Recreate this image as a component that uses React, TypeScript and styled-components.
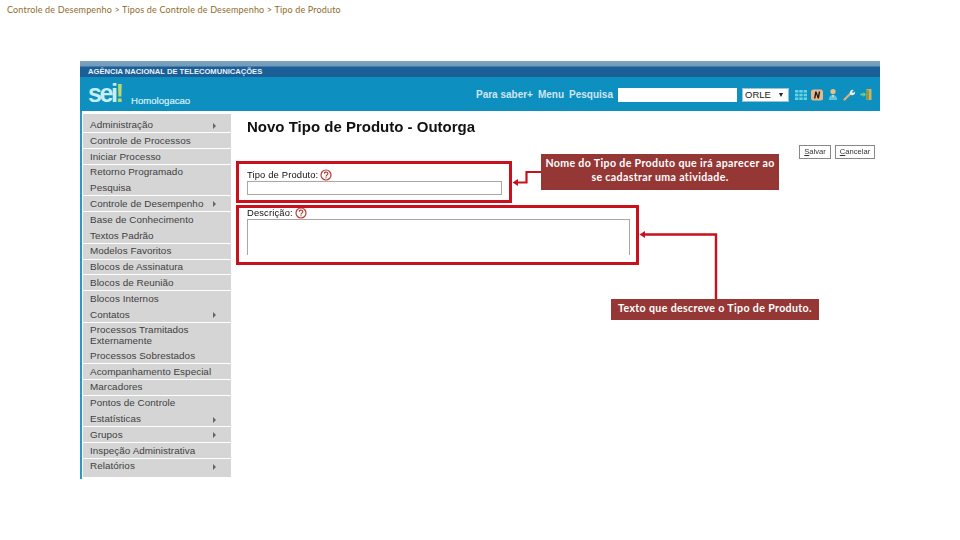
import React from "react";
import styled, { createGlobalStyle } from "styled-components";

const Global = createGlobalStyle`
  html, body { margin: 0; padding: 0; background: #fff; }
`;

const Page = styled.div`
  position: relative;
  width: 960px;
  height: 540px;
  overflow: hidden;
  background: #fff;
`;

const Crumb = styled.div`
  height: 61px;
  box-sizing: border-box;
  padding: 3px 0 0 7px;
  font: 9px/13px Lato, "Open Sans", sans-serif;
  letter-spacing: 0.17px;
  color: #8f6c2c;
  white-space: pre;
`;

const Window = styled.div`
  width: 800px;
  margin-left: 80px;
  height: 418px;
  display: flex;
  flex-direction: column;
  font-family: "Liberation Sans", Arial, sans-serif;
  filter: blur(0.25px);
`;

const TopStrip = styled.div`
  flex: none;
  height: 16px;
  box-sizing: border-box;
  padding: 6px 0 0 8px;
  background: linear-gradient(#7ea3c0 0, #6f9cbd 5px, #1b5e98 6px, #1b5e98 100%);
  color: #e9f2f8;
  font-size: 7.6px;
  line-height: 10px;
  font-weight: 700;
  letter-spacing: 0;
  white-space: nowrap;
`;

const Banner = styled.div`
  flex: none;
  height: 34px;
  background: #0d8fc0;
  display: flex;
  align-items: center;
  padding: 0 5px 0 8px;
`;

const Logo = styled.div`
  flex: none;
  font-weight: 700;
  font-size: 25px;
  line-height: 34px;
  letter-spacing: -2.4px;
  color: #c6eef4;
  height: 34px;
  margin-top: -3px;
  width: 42px;
  padding-left: 0;
`;

const Bang = styled.span`
  color: #b5dd6a;
`;

const Env = styled.div`
  align-self: flex-end;
  margin: 0 0 4px 1px;
  font-size: 9.6px;
  line-height: 12px;
  color: #d9eff6;
  font-weight: 400;
  -webkit-text-stroke: 0.2px #d9eff6;
`;

const Tools = styled.div`
  margin-left: auto;
  margin-right: 3px;
  display: flex;
  align-items: center;
  margin-top: 1px;
`;

const ToolLink = styled.span`
  font-size: 10px;
  font-weight: 700;
  color: #cfe6f2;
  margin-right: 5px;
  white-space: nowrap;
`;

const SearchBox = styled.div`
  width: 119px;
  height: 14px;
  background: #fff;
  margin: 0 5px 0 0;
`;

const Select = styled.div`
  width: 47px;
  height: 14px;
  box-sizing: border-box;
  background: #fff;
  border: 1px solid #9fc3d6;
  color: #222;
  font-size: 9.5px;
  line-height: 12px;
  padding-left: 2px;
  position: relative;
  margin-right: 6px;
  &::after {
    content: "";
    position: absolute;
    right: 5px;
    top: 4px;
    border-left: 2px solid transparent;
    border-right: 2px solid transparent;
    border-top: 4px solid #222;
  }
`;

const Icons = styled.div`
  display: flex;
  gap: 4px;
  align-items: center;
`;

const Body = styled.div`
  flex: 1;
  min-height: 0;
  display: flex;
  border-left: 2px solid #2a98c4;
`;

const Menu = styled.nav`
  flex: none;
  width: 148px;
  margin: 3px 0 2px 1px;
  box-sizing: border-box;
  padding: 3.5px 0 0;
  background: #d5d5d5;
  display: flex;
  flex-direction: column;
`;

const MenuItem = styled.div<{ $plain?: boolean }>`
  position: relative;
  box-sizing: border-box;
  min-height: 15.8px;
  padding: 1.5px 4px 1px 7px;
  border-bottom: 1px solid ${(p) => (p.$plain ? "#d5d5d5" : "#fff")};
  font-size: 9.9px;
  line-height: 11px;
  color: #3f3f3f;
  letter-spacing: 0.04px;
  &:last-child {
    flex: 1;
    border-bottom: 0;
  }
`;

const Arrow = styled.span`
  position: absolute;
  right: 15px;
  top: 5px;
  border-top: 3px solid transparent;
  border-bottom: 3px solid transparent;
  border-left: 3px solid #666;
`;

const Main = styled.main`
  flex: 1;
  position: relative;
  padding: 7px 5px 0 16px;
  display: flex;
  flex-direction: column;
`;

const Title = styled.h1`
  margin: 0;
  font-size: 15px;
  line-height: 18px;
  font-weight: 700;
  color: #111;
`;

const Actions = styled.div`
  display: flex;
  justify-content: flex-end;
  gap: 4px;
  margin-top: 9px;
  height: 14px;
`;

const Btn = styled.div<{ $w: number }>`
  width: ${(p) => p.$w}px;
  height: 14px;
  box-sizing: border-box;
  border: 1px solid #888;
  font-size: 7.6px;
  line-height: 12px;
  text-align: center;
  color: #333;
  background: #fff;
  u { text-decoration: underline; }
`;

const Field = styled.div<{ $gap: number }>`
  display: flex;
  flex-direction: column;
  margin-top: ${(p) => p.$gap}px;
`;

const Label = styled.div`
  display: flex;
  align-items: center;
  gap: 2px;
  font-size: 9.4px;
  line-height: 12px;
  color: #111;
  letter-spacing: 0.15px;
`;

const Input = styled.div`
  width: 255px;
  height: 14px;
  box-sizing: border-box;
  border: 1px solid #a8a8a8;
`;

const Area = styled.div`
  width: 383px;
  height: 36px;
  box-sizing: border-box;
  border: 1px solid #a8a8a8;
  border-bottom: 0;
`;

const RedBox = styled.div<{ $x: number; $y: number; $w: number; $h: number }>`
  position: absolute;
  left: ${(p) => p.$x}px;
  top: ${(p) => p.$y}px;
  width: ${(p) => p.$w}px;
  height: ${(p) => p.$h}px;
  box-sizing: border-box;
  border: 3px solid #c8111c;
`;

const Note = styled.div<{ $x: number; $y: number; $w: number; $h: number }>`
  position: absolute;
  left: ${(p) => p.$x}px;
  top: ${(p) => p.$y}px;
  width: ${(p) => p.$w}px;
  height: ${(p) => p.$h}px;
  box-sizing: border-box;
  padding-top: 1.5px;
  background: #953735;
  color: #fff;
  font: 700 10.6px/14.6px Lato, "Open Sans", sans-serif;
  letter-spacing: 0.36px;
  text-align: center;
  white-space: pre-line;
`;

const Wires = styled.svg`
  position: absolute;
  left: 0;
  top: 0;
`;

const Help = () => (
  <svg width="12" height="12" viewBox="0 0 12 12">
    <circle cx="6" cy="6" r="5" fill="#fff" stroke="#c0392b" strokeWidth="1.2" />
    <path d="M4.3 4.6a1.8 1.6 0 1 1 2.6 1.5c-.6.4-.9.7-.9 1.3" fill="none" stroke="#a8322a" strokeWidth="1.1" />
    <rect x="5.5" y="8.2" width="1.1" height="1.1" fill="#a8322a" />
  </svg>
);

const items: { t: string; arrow?: boolean; plain?: boolean }[] = [
  { t: "Administração", arrow: true },
  { t: "Controle de Processos" },
  { t: "Iniciar Processo" },
  { t: "Retorno Programado", plain: true },
  { t: "Pesquisa" },
  { t: "Controle de Desempenho", arrow: true },
  { t: "Base de Conhecimento", plain: true },
  { t: "Textos Padrão" },
  { t: "Modelos Favoritos" },
  { t: "Blocos de Assinatura" },
  { t: "Blocos de Reunião" },
  { t: "Blocos Internos", plain: true },
  { t: "Contatos", arrow: true },
  { t: "Processos Tramitados Externamente", plain: true },
  { t: "Processos Sobrestados" },
  { t: "Acompanhamento Especial" },
  { t: "Marcadores" },
  { t: "Pontos de Controle", plain: true },
  { t: "Estatísticas", arrow: true },
  { t: "Grupos", arrow: true },
  { t: "Inspeção Administrativa" },
  { t: "Relatórios", arrow: true },
];

export default function App() {
  return (
    <Page>
      <Global />
      <Crumb>Controle de Desempenho &gt; Tipos de Controle de Desempenho &gt; Tipo de Produto</Crumb>
      <Window>
        <TopStrip>AGÊNCIA NACIONAL DE TELECOMUNICAÇÕES</TopStrip>
        <Banner>
          <Logo>
            sei<Bang>!</Bang>
          </Logo>
          <Env>Homologacao</Env>
          <Tools>
            <ToolLink>Para saber+</ToolLink>
            <ToolLink>Menu</ToolLink>
            <ToolLink>Pesquisa</ToolLink>
            <SearchBox />
            <Select>ORLE</Select>
            <Icons>
              <svg width="12" height="12" viewBox="0 0 12 12">
                <g fill="#67d3e0">
                  <rect x="0" y="1" width="3.4" height="2.6" />
                  <rect x="4.3" y="1" width="3.4" height="2.6" />
                  <rect x="8.6" y="1" width="3.4" height="2.6" />
                  <rect x="0" y="4.7" width="3.4" height="2.6" />
                  <rect x="4.3" y="4.7" width="3.4" height="2.6" />
                  <rect x="8.6" y="4.7" width="3.4" height="2.6" />
                  <rect x="0" y="8.4" width="3.4" height="2.6" />
                  <rect x="4.3" y="8.4" width="3.4" height="2.6" />
                  <rect x="8.6" y="8.4" width="3.4" height="2.6" />
                </g>
              </svg>
              <svg width="12" height="12" viewBox="0 0 12 12">
                <rect x="0" y="0.5" width="12" height="11" rx="2.5" fill="#e8b88a" />
                <path d="M3 9.5 4.2 2.5h1.3L7 6.8 7.8 2.5h1.4L8 9.5H6.7L5.2 5.2 4.4 9.5z" fill="#1a1a1a" />
              </svg>
              <svg width="12" height="13" viewBox="0 0 12 13">
                <circle cx="6" cy="3.6" r="2.6" fill="#e8c08a" />
                <path d="M1.8 12c0-3.2 1.8-5 4.2-5s4.2 1.8 4.2 5z" fill="#5fc3dc" />
                <path d="M5 7.2h2L6 10z" fill="#f1e3b0" />
              </svg>
              <svg width="13" height="13" viewBox="0 0 13 13">
                <path d="M1.5 11.5 7 6" stroke="#e6b070" strokeWidth="2.2" strokeLinecap="round" />
                <path d="M7 6a3 3 0 0 1 3.8-4L9 4l1 1 2-1.6A3 3 0 0 1 8 7z" fill="#e9eef0" />
              </svg>
              <svg width="12" height="13" viewBox="0 0 12 13">
                <rect x="6" y="1" width="5.5" height="11" fill="#c9b36a" />
                <path d="M6 1 9 2.5v10L6 12z" fill="#8a9a4a" />
                <path d="M0.5 5.5h3V4l2.5 2.5L3.5 9V7.5h-3z" fill="#6ed08a" />
              </svg>
            </Icons>
          </Tools>
        </Banner>
        <Body>
          <Menu>
            {items.map((m) => (
              <MenuItem key={m.t} $plain={m.plain}>
                {m.t}
                {m.arrow && <Arrow />}
              </MenuItem>
            ))}
          </Menu>
          <Main>
            <Title>Novo Tipo de Produto - Outorga</Title>
            <Actions>
              <Btn $w={32}>
                <u>S</u>alvar
              </Btn>
              <Btn $w={40}>
                <u>C</u>ancelar
              </Btn>
            </Actions>
            <Field $gap={10}>
              <Label>
                Tipo de Produto: <Help />
              </Label>
              <Input />
            </Field>
            <Field $gap={12}>
              <Label>
                Descrição: <Help />
              </Label>
              <Area />
            </Field>
          </Main>
        </Body>
      </Window>
      <RedBox $x={236} $y={161} $w={276} $h={42} />
      <RedBox $x={236} $y={205} $w={403} $h={60} />
      <Wires width="960" height="540" viewBox="0 0 960 540">
        <path d="M541 172H526.5V182.5H516" fill="none" stroke="#c8111c" strokeWidth="2.2" />
        <path d="M512.5 182.5 518 179v7z" fill="#c8111c" />
        <path d="M716 299V234.5H644" fill="none" stroke="#c8111c" strokeWidth="2.4" />
        <path d="M639.5 234.5 645 231v7z" fill="#c8111c" />
      </Wires>
      <Note $x={541} $y={154} $w={238} $h={36}>
        {"Nome do Tipo de Produto que irá aparecer ao\nse cadastrar uma atividade."}
      </Note>
      <Note $x={611} $y={299} $w={208} $h={21}>
        Texto que descreve o Tipo de Produto.
      </Note>
    </Page>
  );
}
